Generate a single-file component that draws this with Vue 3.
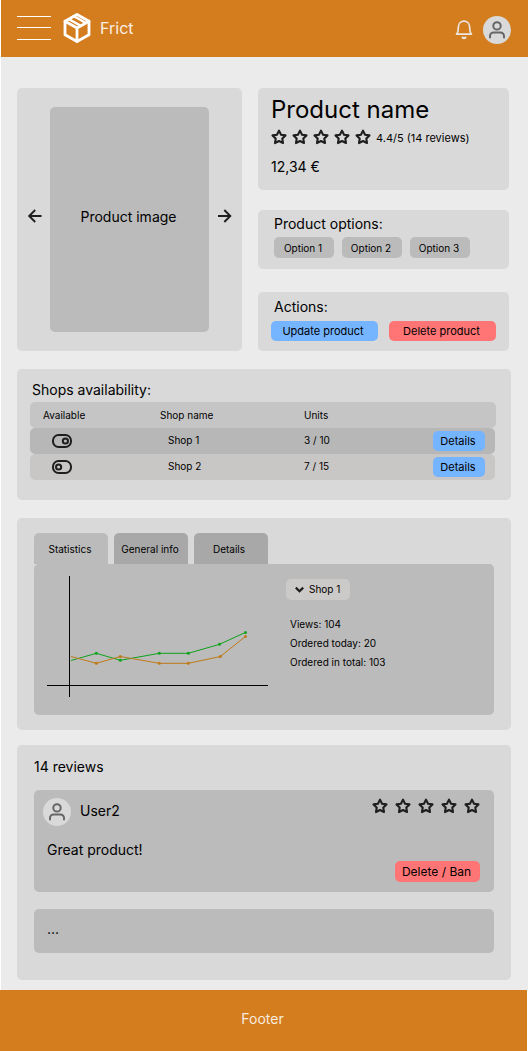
<script setup>
import { h } from 'vue'

const Star = () =>
  h('svg', { class: 'star', width: 16, height: 16, viewBox: '0 0 16 16' }, [
    h('path', {
      d: 'M8 1.6L10.05 5.69L14.5 6.4L11.3 9.58L12 14.05L8 12L4 14.05L4.7 9.58L1.5 6.4L5.95 5.69Z',
      fill: 'none',
      stroke: '#1e1e1e',
      'stroke-width': 2.1,
      'stroke-linejoin': 'round'
    })
  ])

const Avatar = () =>
  h('svg', { width: 28, height: 28, viewBox: '0 0 28 28' }, [
    h('circle', { cx: 14, cy: 14, r: 14, fill: '#d9d9d9' }),
    h('g', { fill: 'none', stroke: '#666', 'stroke-width': 2, 'stroke-linecap': 'round' }, [
      h('circle', { cx: 14, cy: 9.9, r: 3.7 }),
      h('path', { d: 'M7 21.6V20a3.6 3.6 0 0 1 3.6-3.6h6.8A3.6 3.6 0 0 1 21 20v1.6' })
    ])
  ])

const options = ['Option 1', 'Option 2', 'Option 3']
const shops = [
  { name: 'Shop 1', units: '3 / 10', on: true },
  { name: 'Shop 2', units: '7 / 15', on: false }
]
const tabs = ['Statistics', 'General info', 'Details']
const facts = ['Views: 104', 'Ordered today: 20', 'Ordered in total: 103']
const series = [
  { color: '#0fa21b', points: [[37, 96.5], [62.3, 89.3], [86.3, 96.3], [125.3, 89.3], [154.3, 89.3], [185.5, 80.3], [211.5, 68.4]] },
  { color: '#bf7a17', points: [[37, 92.5], [62.3, 99.3], [86.3, 92.5], [125.3, 99.3], [154.3, 99.3], [186.3, 92.5], [211.5, 72.4]] }
]
</script>

<template>
  <div class="page">
    <header class="topbar">
      <div class="burger"><i></i><i></i><i></i></div>
      <svg class="logo" width="28" height="32" viewBox="0 0 28 32" fill="none" stroke="#fff" stroke-width="2.8" stroke-linejoin="round" stroke-linecap="round">
        <path d="M14 2.5L26 9.2V22.8L14 29.5L2 22.8V9.2Z" />
        <path d="M2 9.2L14 16L26 9.2M14 16V29.5" />
        <path d="M6 7.2L17 13.4M10.6 4L21.500 10.300" stroke-width="2.400" />
      </svg>
      <span class="brand">Frict</span>
      <svg class="bell" width="18" height="20" viewBox="0 0 18 20" fill="none" stroke="#ebe6df" stroke-width="1.7" stroke-linejoin="round" stroke-linecap="round">
        <path d="M1.5 14.1C3.2 12.8 3.2 11 3.3 7.1C3.5 3.5 5.9 1.2 9 1.2s5.500 2.300 5.700 5.900C14.800 11 14.800 12.800 16.500 14.100Z" />
        <path d="M7.600 17.600q1.400 1 2.800 0" stroke-width="2.200" />
      </svg>
      <Avatar />
    </header>

    <main>
      <div class="overview">
        <section class="card gallery">
          <svg width="16" height="16" viewBox="0 0 16 16" class="arrow"><path d="M14.500 8H2.500M8.200 2L2.200 8L8.200 14" /></svg>
          <div class="image">Product image</div>
          <svg width="16" height="16" viewBox="0 0 16 16" class="arrow"><path d="M2 8H14M8.300 2L14.300 8L8.300 14" /></svg>
        </section>
        <div class="side">
          <section class="card summary">
            <h1>Product name</h1>
            <div class="rating"><Star v-for="n in 5" :key="n" /><span>4.4/5 (14 reviews)</span></div>
            <div class="price">12,34 €</div>
          </section>
          <section class="card options">
            <h2>Product options:</h2>
            <div class="chips"><button v-for="o in options" :key="o">{{ o }}</button></div>
          </section>
          <section class="card actions">
            <h2>Actions:</h2>
            <div class="buttons">
              <button class="blue">Update product</button>
              <button class="red">Delete product</button>
            </div>
          </section>
        </div>
      </div>

      <section class="card shops">
        <h2>Shops availability:</h2>
        <div class="row head"><span>Available</span><span>Shop name</span><span>Units</span></div>
        <div v-for="s in shops" :key="s.name" class="row" :class="{ on: s.on }">
          <svg class="toggle" width="20" height="14" viewBox="0 0 20 14" fill="none" stroke="#1e1e1e" stroke-width="2">
            <rect x="1" y="1" width="18" height="12" rx="5.600" />
            <circle :cx="s.on ? 13.400 : 6.600" cy="7" r="2.600" />
          </svg>
          <span class="name">{{ s.name }}</span>
          <span>{{ s.units }}</span>
          <button class="blue">Details</button>
        </div>
      </section>

      <section class="card stats">
        <nav><button v-for="(t, i) in tabs" :key="t" :class="{ active: i === 0 }">{{ t }}</button></nav>
        <div class="panel">
          <svg class="chart" width="240" height="151" viewBox="0 0 240 151">
            <path d="M35.500 12V133M13 121.500H234" stroke="#000" />
            <g v-for="s in series" :key="s.color">
              <polyline :points="s.points.join(' ')" fill="none" :stroke="s.color" />
              <circle v-for="p in s.points.slice(1)" :key="p[0]" :cx="p[0]" :cy="p[1]" r="1.500" :fill="s.color" />
            </g>
          </svg>
          <div class="info">
            <button class="select">
              <svg width="11" height="7" viewBox="0 0 11 7"><path d="M1.800 1.600L5.500 5.200L9.200 1.600" fill="none" stroke="#1e1e1e" stroke-width="2.200" /></svg>
              Shop 1
            </button>
            <p v-for="f in facts" :key="f">{{ f }}</p>
          </div>
        </div>
      </section>

      <section class="card reviews">
        <h2>14 reviews</h2>
        <article class="review">
          <div class="who">
            <Avatar />
            <span>User2</span>
            <div class="score"><Star v-for="n in 5" :key="n" /></div>
          </div>
          <p>Great product!</p>
          <button class="red">Delete / Ban</button>
        </article>
        <article class="more">...</article>
      </section>
    </main>

    <footer>Footer</footer>
  </div>
</template>

<style>
body {
  background: #fff;
}
</style>

<style scoped>
* {
  box-sizing: border-box;
}
.page {
  width: 528px;
  height: 1051px;
  display: flex;
  flex-direction: column;
  overflow: hidden;
  font: 14px/20px Inter, sans-serif;
  color: #000;
}
svg {
  display: block;
  flex: none;
}
h1,
h2,
p {
  margin: 0;
  font-weight: 400;
}
h2 {
  font-size: 14px;
  line-height: 20px;
}
button {
  border: 0;
  padding: 0 2px 0 0;
  border-radius: 5px;
  font: 10px/20px Inter, sans-serif;
  color: #000;
  white-space: nowrap;
}
.blue {
  background: #75b4ff;
}
.red {
  background: #ff7575;
}
.topbar {
  height: 57px;
  margin-left: 1px;
  padding: 0 17px 0 16px;
  display: flex;
  align-items: flex-start;
  background: #d37d1f;
}
.topbar > svg:last-child {
  margin-top: 16px;
}
.burger {
  width: 34px;
  height: 24px;
  margin: 16px 12px 0 0;
  display: grid;
  grid-template-rows: 11px 12px 1px;
}
.burger i {
  height: 1px;
  background: #fff;
}
.logo {
  margin-top: 12px;
}
.brand {
  margin: 18px auto 0 9px;
  font-size: 16px;
  color: #f9efe5;
}
.bell {
  margin: 20px 10px 0 0;
}
main {
  flex: 1;
  margin-left: 1px;
  padding: 31px 17px 0 16px;
  background: #ebebeb;
}
.card {
  background: #d9d9d9;
  border-radius: 5px;
}
.overview {
  display: flex;
  gap: 16px;
}
.gallery {
  width: 225px;
  height: 263px;
  padding: 0 10px 0 10px;
  display: flex;
  align-items: center;
  justify-content: space-between;
}
.arrow {
  margin-top: -7px;
  fill: none;
  stroke: #1e1e1e;
  stroke-width: 1.900;
}
.image {
  width: 159px;
  height: 225px;
  margin-right: 1px;
  padding-right: 1px;
  border-radius: 5px;
  background: #bbb;
  text-align: center;
  line-height: 220px;
}
.side {
  width: 251px;
}
.summary {
  height: 102px;
  padding: 7px 13px 0;
}
h1 {
  font-size: 24px;
  line-height: 30px;
}
.rating {
  display: flex;
  align-items: center;
  gap: 5px;
  height: 26px;
  margin-top: -1px;
  font-size: 11px;
}
.rating .star {
  margin-top: -1px;
}
.rating span {
  margin-top: 2px;
}
.price {
  margin-top: 7px;
}
.options {
  height: 59px;
  margin-top: 20px;
  padding: 4px 16px;
}
.chips {
  display: flex;
  gap: 8px;
  margin-top: 3px;
}
.chips button {
  width: 60px;
  height: 21px;
  background: #bbb;
}
.actions {
  height: 59px;
  margin-top: 23px;
  padding: 5px 13px;
}
.actions h2 {
  margin-left: 3px;
}
.buttons {
  display: flex;
  gap: 11px;
  margin-top: 4px;
}
.buttons button {
  width: 107px;
  height: 20px;
  font-size: 11px;
}
.buttons .blue {
  padding-right: 3px;
}
.shops {
  height: 131px;
  margin: 18px 0;
  width: 494px;
  padding: 11px 15px 0 13px;
}
.shops h2 {
  margin: 0 0 2px 2px;
}
.row {
  width: 465px;
  height: 26px;
  padding-right: 10px;
  display: grid;
  grid-template-columns: 130px 144px 129px 52px;
  align-items: center;
  background: #c9c7c5;
  border-radius: 5px;
  font-size: 10px;
}
.row span {
  margin-top: -2px;
}
.row.on {
  background: #b7b7b7;
}
.row.head {
  width: 466px;
  background: #c5c5c5;
}
.head span {
  margin-top: 0;
}
.head span:first-child {
  padding-left: 13px;
}
.toggle {
  margin-left: 22px;
}
.row .name {
  padding-left: 8px;
}
.row button {
  height: 20px;
  font-size: 11px;
}
.stats {
  width: 494px;
  height: 212px;
  padding: 15px 17px;
}
nav {
  display: flex;
  gap: 6px;
}
nav button {
  width: 74px;
  height: 31px;
  border-radius: 5px 5px 0 0;
  background: #a8a8a8;
}
nav button:last-child {
  padding-right: 4px;
}
nav .active {
  background: #bbb;
}
.panel {
  height: 151px;
  display: flex;
  gap: 12px;
  border-radius: 5px;
  background: #bbb;
}
.info {
  padding-top: 15px;
  font-size: 10px;
}
.select {
  width: 64px;
  height: 21px;
  margin-bottom: 15px;
  display: flex;
  align-items: center;
  padding: 0 0 1px 8px;
  gap: 4px;
  background: #cccac8;
}
.info p {
  margin-left: 4px;
  line-height: 19px;
}
.reviews {
  width: 494px;
  height: 235px;
  margin-top: 15px;
  padding: 12px 17px;
}
.review {
  height: 102px;
  margin: 13px 0 17px;
  padding: 8px 14px 0 9px;
  display: flex;
  flex-direction: column;
  border-radius: 5px;
  background: #bbb;
}
.who {
  display: flex;
  height: 28px;
}
.who span {
  margin: 3px auto 0 9px;
}
.score {
  display: flex;
  gap: 7px;
}
.review p {
  margin: 14px 0 1px 4px;
}
.review .red {
  width: 85px;
  height: 21px;
  align-self: flex-end;
  font-size: 12px;
}
.more {
  height: 44px;
  padding: 10px 13px;
  border-radius: 5px;
  background: #bbb;
}
footer {
  width: 527px;
  height: 61px;
  padding: 19px 2px 0 0;
  background: #d37d1f;
  color: #f7ebdf;
  text-align: center;
}
</style>
